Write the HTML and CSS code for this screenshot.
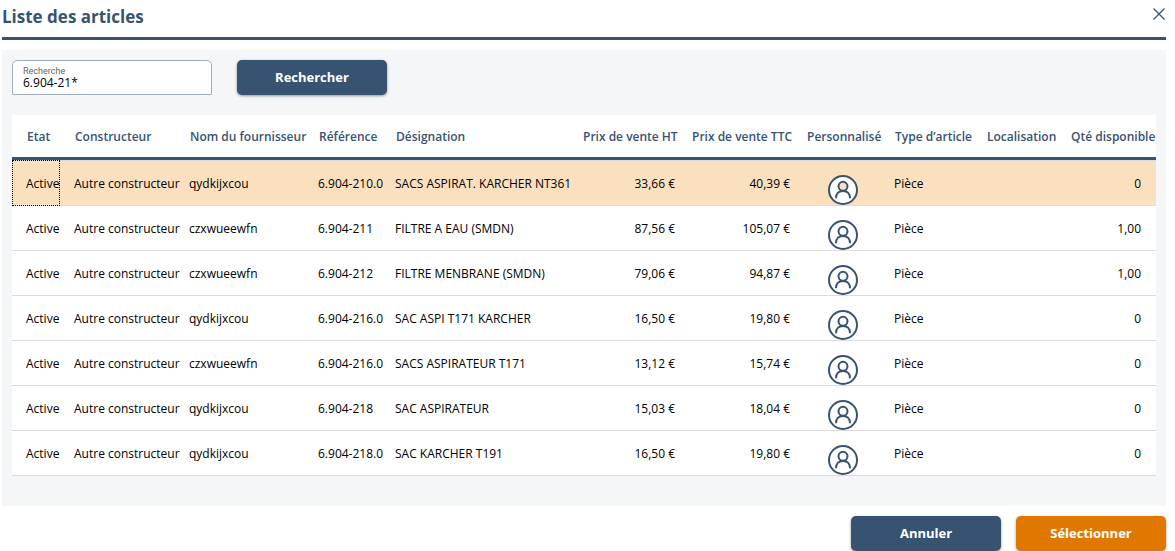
FILE: index.html
```html
<!DOCTYPE html>
<html lang="fr">
<head>
<meta charset="utf-8">
<title>Liste des articles</title>
<link rel="stylesheet" href="styles.css">
</head>
<body>
<svg class="defs" aria-hidden="true">
  <symbol id="person" viewBox="0 0 30 30">
    <path class="person-bg" fill-rule="evenodd" d="M15 1a14 14 0 1 0 0 28a14 14 0 1 0 0-28ZM15 6.500a4.500 4.500 0 1 1 0 9a4.500 4.500 0 1 1 0-9Z"/>
    <circle cx="15" cy="15" r="14"/>
    <circle cx="15" cy="11.300" r="4.500"/>
    <path d="M8 23.200C8 18.500 11 16 15 16S22 18.500 22 23.200"/>
  </symbol>
</svg>
<main class="dialog">
  <header class="dialog-header">
    <h1 class="title">Liste des articles</h1>
    <button class="close" type="button" aria-label="Fermer"><svg class="close-icon" viewBox="0 0 12 12"><path d="M0.500 0.500L11.500 11.500M11.500 0.500L0.500 11.500"/></svg></button>
  </header>
  <section class="panel">
    <form class="search">
      <div class="field">
        <label class="field-label" for="q">Recherche</label>
        <input class="field-input" id="q" type="text" value="6.904-21*">
      </div>
      <button class="btn" type="button">Rechercher</button>
    </form>
    <table class="grid">
      <colgroup>
        <col class="c-state"><col class="c-maker"><col class="c-supplier"><col class="c-ref"><col class="c-name"><col class="c-ht"><col class="c-ttc"><col class="c-custom"><col class="c-type"><col class="c-place"><col class="c-qty">
      </colgroup>
      <thead>
        <tr><th>Etat</th><th>Constructeur</th><th>Nom du fournisseur</th><th>Référence</th><th>Désignation</th><th>Prix de vente HT</th><th>Prix de vente TTC</th><th>Personnalisé</th><th>Type d’article</th><th>Localisation</th><th>Qté disponible</th></tr>
      </thead>
      <tbody>
        <tr class="selected"><td class="focused">Active</td><td>Autre constructeur</td><td>qydkijxcou</td><td>6.904-210.0</td><td>SACS ASPIRAT. KARCHER NT361</td><td class="price">33,66 €</td><td class="price">40,39 €</td><td class="custom"><svg class="person"><use href="#person"/></svg></td><td>Pièce</td><td></td><td class="qty">0</td></tr>
        <tr><td>Active</td><td>Autre constructeur</td><td>czxwueewfn</td><td>6.904-211</td><td>FILTRE A EAU (SMDN)</td><td class="price">87,56 €</td><td class="price">105,07 €</td><td class="custom"><svg class="person"><use href="#person"/></svg></td><td>Pièce</td><td></td><td class="qty">1,00</td></tr>
        <tr><td>Active</td><td>Autre constructeur</td><td>czxwueewfn</td><td>6.904-212</td><td>FILTRE MENBRANE (SMDN)</td><td class="price">79,06 €</td><td class="price">94,87 €</td><td class="custom"><svg class="person"><use href="#person"/></svg></td><td>Pièce</td><td></td><td class="qty">1,00</td></tr>
        <tr><td>Active</td><td>Autre constructeur</td><td>qydkijxcou</td><td>6.904-216.0</td><td>SAC ASPI T171 KARCHER</td><td class="price">16,50 €</td><td class="price">19,80 €</td><td class="custom"><svg class="person"><use href="#person"/></svg></td><td>Pièce</td><td></td><td class="qty">0</td></tr>
        <tr><td>Active</td><td>Autre constructeur</td><td>czxwueewfn</td><td>6.904-216.0</td><td>SACS ASPIRATEUR T171</td><td class="price">13,12 €</td><td class="price">15,74 €</td><td class="custom"><svg class="person"><use href="#person"/></svg></td><td>Pièce</td><td></td><td class="qty">0</td></tr>
        <tr><td>Active</td><td>Autre constructeur</td><td>qydkijxcou</td><td>6.904-218</td><td>SAC ASPIRATEUR</td><td class="price">15,03 €</td><td class="price">18,04 €</td><td class="custom"><svg class="person"><use href="#person"/></svg></td><td>Pièce</td><td></td><td class="qty">0</td></tr>
        <tr><td>Active</td><td>Autre constructeur</td><td>qydkijxcou</td><td>6.904-218.0</td><td>SAC KARCHER T191</td><td class="price">16,50 €</td><td class="price">19,80 €</td><td class="custom"><svg class="person"><use href="#person"/></svg></td><td>Pièce</td><td></td><td class="qty">0</td></tr>
      </tbody>
    </table>
  </section>
  <footer class="actions">
    <button class="btn" type="button">Annuler</button>
    <button class="btn btn-primary" type="button">Sélectionner</button>
  </footer>
</main>
</body>
</html>
```
FILE: styles.css
```css
* { box-sizing: border-box; }
body {
  margin: 0;
  background: #fff;
  color: #000;
  font: 12px/16px "Segoe UI", "Open Sans", "Noto Sans", sans-serif;
}
.defs { display: none; }
.dialog { padding: 0 9px 0 2px; }
.dialog-header {
  display: flex;
  justify-content: space-between;
  align-items: flex-start;
  height: 40px;
  padding-top: 5px;
  border-bottom: 3px solid #385372;
}
.title {
  margin: 0;
  color: #385372;
  font-size: 17px;
  line-height: 24px;
  font-weight: 700;
}
.close {
  display: flex;
  padding: 3px 1px;
  border: 0;
  background: none;
}
.close-icon {
  width: 12px;
  height: 12px;
  fill: none;
  stroke: #385372;
  stroke-width: 1.3;
}
.panel {
  margin-top: 10px;
  padding: 10px 10px 30px;
  background: #f5f6f8;
}
.search {
  display: flex;
  gap: 25px;
  margin-bottom: 20px;
}
.field {
  display: flex;
  flex-direction: column;
  width: 200px;
  height: 35px;
  padding: 5px 10px 0;
  border: 1px solid #a0aebe;
  border-radius: 5px 5px 0 0;
  background: #fff;
}
.field-label {
  color: #666;
  font-family: "Segoe UI", Roboto, sans-serif;
  font-size: 9px;
  line-height: 10px;
}
.field-input {
  width: 100%;
  height: 14px;
  padding: 0;
  border: 0;
  outline: 0;
  background: none;
  color: #000;
  font: inherit;
  line-height: 14px;
}
.btn {
  width: 150px;
  height: 35px;
  padding: 0 0 2px;
  border: 0;
  border-radius: 5px;
  background: #385372;
  box-shadow: 0 1px 3px rgba(0, 0, 0, 0.4);
  color: #fff;
  font: 700 13px/18px "Segoe UI", "Open Sans", "Noto Sans", sans-serif;
}
.btn-primary { background: #e07800; }
.grid {
  width: 100%;
  table-layout: fixed;
  border-collapse: separate;
  border-spacing: 0;
  background: #fff;
}
.c-state { width: 48px; }
.c-maker { width: 115px; }
.c-supplier { width: 129px; }
.c-ref { width: 77px; }
.c-name { width: 187px; }
.c-ht { width: 109px; }
.c-ttc { width: 115px; }
.c-custom { width: 88px; }
.c-type { width: 92px; }
.c-place { width: 84px; }
.c-qty { width: 100px; }
.grid th {
  height: 45px;
  padding: 2px 0 0 15px;
  border-bottom: 3px solid #385372;
  color: #385372;
  font-weight: 600;
  text-align: left;
  white-space: nowrap;
}
.grid td {
  height: 45px;
  padding: 2px 0 0 14px;
  border-bottom: 1px solid #dcdcdc;
  white-space: nowrap;
}
.grid tbody tr:first-child td {
  height: 46px;
  border-top: 1px solid #dcdcdc;
}
.grid .selected { background: #fbe0c0; }
.grid .focused {
  outline: 1px dotted #000;
  outline-offset: -1px;
}
.grid .price {
  padding-right: 2px;
  text-align: right;
}
.grid .qty {
  padding-right: 15px;
  text-align: right;
}
.grid .custom {
  text-align: center;
  vertical-align: bottom;
}
.person {
  display: block;
  width: 30px;
  height: 30px;
  margin: 0 auto;
  fill: none;
  stroke: #385372;
  stroke-width: 2;
}
.person-bg {
  fill: #fff;
  stroke: none;
}
.actions {
  display: flex;
  justify-content: flex-end;
  gap: 15px;
  padding-top: 10px;
}
```
